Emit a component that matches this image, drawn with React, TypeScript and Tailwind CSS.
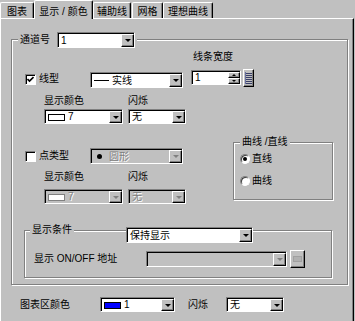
import clsx from 'clsx'
import type { ReactNode } from 'react'

const sunken = 'border border-[#808080] border-r-white border-b-white shadow-[inset_1px_1px_0_#000]'
const raised = 'border border-white border-r-black border-b-black shadow-[inset_-1px_-1px_0_#808080]'
const etched = 'border border-[#808080] shadow-[inset_1px_1px_0_#fff,1px_1px_0_#fff]'
const dim = 'text-[#808080] [text-shadow:1px_1px_0_#fff]'

function Arrow({ disabled }: { disabled?: boolean }) {
  return (
    <div className={`flex w-[13px] shrink-0 items-center justify-center bg-[#c0c0c0] ${raised}`}>
      <div
        className={clsx(
          'h-0 w-0 border-x-[3px] border-t-[3px] border-x-transparent',
          disabled ? 'border-t-[#808080]' : 'border-t-black'
        )}
      />
    </div>
  )
}

function Select({ className, disabled, children }: { className?: string; disabled?: boolean; children?: ReactNode }) {
  return (
    <div className={clsx('flex shrink-0 pl-px pt-px', sunken, disabled ? 'bg-[#c0c0c0]' : 'bg-white', className)}>
      <div className={clsx('flex min-w-0 flex-1 items-center gap-[3px] pl-[2px] leading-none', disabled && dim)}>
        {children}
      </div>
      <Arrow disabled={disabled} />
    </div>
  )
}

function Swatch({ color, disabled }: { color: string; disabled?: boolean }) {
  return (
    <span
      className={clsx('h-[7px] w-[17px] shrink-0 border', disabled ? 'border-[#808080]' : 'border-black', color)}
    />
  )
}

function Checkbox({ checked }: { checked?: boolean }) {
  return (
    <div className={`flex h-[11px] w-[11px] shrink-0 items-center justify-center bg-white ${sunken}`}>
      {checked && (
        <svg width="7" height="7" viewBox="0 0 7 7">
          <path d="M0.5 3 L2.5 5 L6.5 1" fill="none" stroke="#000" strokeWidth="1.6" />
        </svg>
      )}
    </div>
  )
}

function Radio({ checked }: { checked?: boolean }) {
  return (
    <div className="flex h-[10px] w-[10px] shrink-0 items-center justify-center rounded-full border border-[#808080] border-r-white border-b-white bg-white shadow-[inset_1px_1px_0_#404040]">
      {checked && <div className="h-[4px] w-[4px] rounded-full bg-black" />}
    </div>
  )
}

function Tab({ label, w, active }: { label: string; w: string; active?: boolean }) {
  return (
    <div
      className={clsx(
        'flex shrink-0 justify-center rounded-t-[2px] border border-b-0 border-white border-r-black bg-[#c0c0c0] leading-[12px] shadow-[inset_-1px_0_0_#808080]',
        w,
        active ? 'relative z-10 -mb-px h-[19px] pt-[5px]' : 'h-[16px] pt-[3px]'
      )}
    >
      {label}
    </div>
  )
}

export default function App() {
  return (
    <div className="flex h-[321px] w-[355px] flex-col overflow-hidden bg-[#c0c0c0] font-['Liberation_Sans','Noto_Sans_CJK_SC',sans-serif] text-[10px] text-black">
      {/* tabs */}
      <div className="flex h-[18px] shrink-0 items-end">
        <Tab label="图表" w="w-[34px]" />
        <Tab label="显示 / 颜色" w="w-[59px]" active />
        <Tab label="辅助线" w="w-[38px]" />
        <div className="ml-px">
          <Tab label="网格" w="w-[31px]" />
        </div>
        <Tab label="理想曲线" w="w-[50px]" />
      </div>

      <div className="h-[303px] w-[354px] border-t border-l border-white border-r border-r-black shadow-[inset_-1px_0_0_#808080]">
        {/* 通道号 group */}
        <div className={`relative ml-[10px] mt-[20px] h-[246px] w-[337px] ${etched}`}>
          <div className="absolute -top-[8px] left-[6px] flex h-[16px] items-center gap-[7px] bg-[#c0c0c0] px-[2px]">
            <span className="leading-[12px]">通道号</span>
            <Select className="h-[16px] w-[78px]">1</Select>
          </div>

          <div className="ml-[181px] mt-[10px] h-[13px] leading-[13px]">线条宽度</div>

          <div className="mt-[6px] flex h-[19px] items-start">
            <div className="flex w-[78px] items-center gap-[3px] pl-[13px] pt-[4px]">
              <Checkbox checked />
              <span className="leading-[12px]">线型</span>
            </div>
            <Select className="mt-[3px] h-[16px] w-[93px]">
              <span className="h-px w-[15px] bg-black" />
              <span>实线</span>
            </Select>
            <div className={`ml-[8px] mt-px flex h-[15px] w-[50px] bg-white pl-px pt-px ${sunken}`}>
              <div className="flex flex-1 items-center pl-[2px] leading-none">1</div>
              <div className="flex w-[12px] flex-col">
                <div className={`flex flex-1 items-center justify-center bg-[#c0c0c0] ${raised}`}>
                  <div className="h-0 w-0 border-x-[2px] border-b-[2px] border-x-transparent border-b-black" />
                </div>
                <div className={`flex flex-1 items-center justify-center bg-[#c0c0c0] ${raised}`}>
                  <div className="h-0 w-0 border-x-[2px] border-t-[2px] border-x-transparent border-t-black" />
                </div>
              </div>
            </div>
            <div className={`ml-[2px] flex h-[18px] w-[11px] items-center justify-center bg-[#c0c0c0] ${raised}`}>
              <svg width="7" height="12" viewBox="0 0 7 12">
                {[1.5, 3.5, 5.5, 7.5, 9.5, 11.5].map((y) => (
                  <line key={y} x1="0" y1={y} x2="7" y2={y} stroke="#3a4068" strokeWidth="1" />
                ))}
                <line x1="0.5" y1="0" x2="0.5" y2="12" stroke="#6870a0" strokeWidth="1" />
              </svg>
            </div>
          </div>

          <div className="mt-[7px] flex h-[12px] pl-[32px] leading-[12px]">
            <span className="w-[84px]">显示颜色</span>
            <span>闪烁</span>
          </div>
          <div className="mt-[2px] flex pl-[32px]">
            <Select className="h-[15px] w-[79px]">
              <Swatch color="bg-white" />
              <span>7</span>
            </Select>
            <Select className="ml-[5px] h-[15px] w-[58px]">无</Select>
          </div>

          <div className="mt-[18px] flex">
            <div className="w-[221px]">
              <div className="mt-[6px] flex h-[16px]">
                <div className="flex w-[78px] items-center gap-[3px] pl-[13px]">
                  <Checkbox />
                  <span className="leading-[12px]">点类型</span>
                </div>
                <Select className="h-[16px] w-[93px]" disabled>
                  <span className="ml-[3px] h-[5px] w-[5px] rounded-full bg-black" />
                  <span className="ml-[4px]">圆形</span>
                </Select>
              </div>
              <div className="mt-[7px] flex h-[12px] pl-[32px] leading-[12px]">
                <span className="w-[84px]">显示颜色</span>
                <span>闪烁</span>
              </div>
              <div className="mt-[6px] flex pl-[32px]">
                <Select className="h-[15px] w-[79px]" disabled>
                  <Swatch color="bg-white" disabled />
                  <span>7</span>
                </Select>
                <Select className="ml-[5px] h-[15px] w-[58px]" disabled>
                  无
                </Select>
              </div>
            </div>

            <div className={`relative h-[58px] w-[100px] ${etched}`}>
              <div className="absolute -top-[7px] left-[6px] bg-[#c0c0c0] px-[2px] leading-[12px]">曲线 /直线</div>
              <div className="mt-[11px] flex h-[10px] items-center gap-[2px] pl-[6px]">
                <Radio checked />
                <span className="leading-[12px]">直线</span>
              </div>
              <div className="mt-[12px] flex h-[10px] items-center gap-[2px] pl-[6px]">
                <Radio />
                <span className="leading-[12px]">曲线</span>
              </div>
            </div>
          </div>

          {/* 显示条件 group */}
          <div className={`relative ml-[12px] mt-[26px] h-[48px] w-[308px] ${etched}`}>
            <div className="absolute -top-[7px] left-[5px] bg-[#c0c0c0] px-[2px] leading-[12px]">显示条件</div>
            <Select className="absolute -top-[4px] left-[101px] h-[16px] w-[127px]">保持显示</Select>
            <div className="mt-[19px] flex">
              <div className="flex h-[18px] w-[121px] items-center pl-[9px] leading-[12px]">显示 ON/OFF 地址</div>
              <Select className="mt-px h-[16px] w-[141px]" disabled />
              <div className={`ml-[3px] flex h-[18px] w-[15px] items-center justify-center bg-[#c0c0c0] ${raised}`}>
                <div className="h-[6px] w-[9px] border border-[#a0a0a0] bg-[#b0b0b0]" />
              </div>
            </div>
          </div>
        </div>

        <div className="ml-[19px] mt-[12px] flex h-[15px] items-center">
          <span className="w-[80px] leading-[12px]">图表区颜色</span>
          <Select className="h-[15px] w-[75px]">
            <Swatch color="bg-[#0000ff]" />
            <span>1</span>
          </Select>
          <span className="ml-[13px] w-[38px] leading-[12px]">闪烁</span>
          <Select className="h-[15px] w-[58px]">无</Select>
        </div>
      </div>
    </div>
  )
}
